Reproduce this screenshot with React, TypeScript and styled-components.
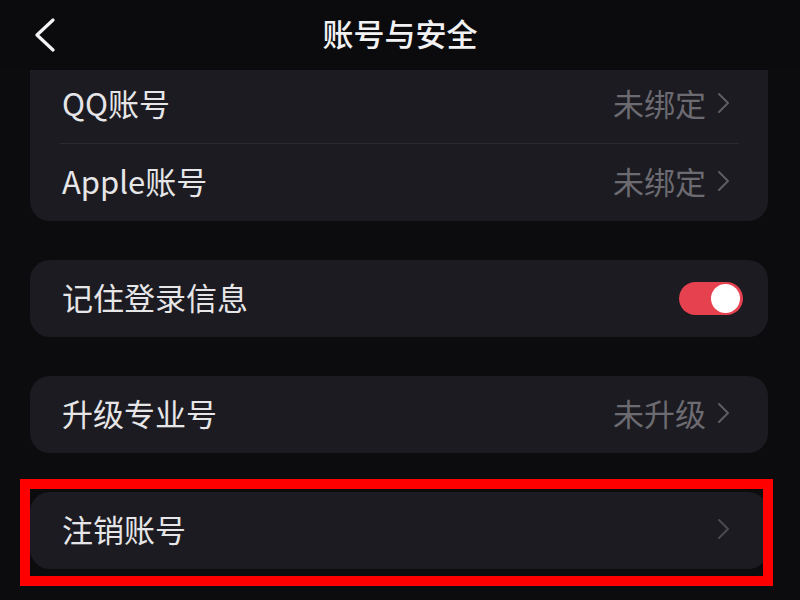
import React from "react";
import styled, { createGlobalStyle } from "styled-components";

const GlobalStyle = createGlobalStyle`
  html, body {
    margin: 0;
    padding: 0;
    background: #0c0c0f;
  }
  * {
    box-sizing: border-box;
  }
`;

const Page = styled.div`
  position: relative;
  width: 800px;
  height: 600px;
  overflow: hidden;
  display: flex;
  flex-direction: column;
  background: #0c0c0f;
  font-family: "Noto Sans CJK SC", "Noto Sans", sans-serif;
  color: #e8e8ea;
`;

const Header = styled.div`
  height: 70px;
  flex-shrink: 0;
  display: grid;
  grid-template-columns: 120px 1fr 120px;
  align-items: center;
  padding-bottom: 6px;
  background: #0b0b0e;
`;

const BackButton = styled.div`
  display: flex;
  align-items: center;
  padding-left: 34px;
  padding-top: 6px;
`;

const Title = styled.div`
  text-align: center;
  font-size: 31px;
  font-weight: 500;
  color: #f2f2f4;
`;

const ScrollArea = styled.div`
  flex: 1;
  overflow: hidden;
  padding: 0 32px 0 30px;
`;

const List = styled.div`
  display: flex;
  flex-direction: column;
  gap: 39px;
  margin-top: -4px;
`;

const Card = styled.div<{ $cut?: boolean }>`
  background: #1c1b21;
  border-radius: ${(p) => (p.$cut ? "0 0 20px 20px" : "20px")};
  overflow: hidden;
  display: flex;
  flex-direction: column;
`;

const Row = styled.div`
  height: 77px;
  display: flex;
  align-items: center;
  justify-content: space-between;
  padding: 0 38px 4px 32px;
`;

const Divider = styled.div`
  height: 1px;
  margin: 0 29px 0 30px;
  background: #2c2b31;
`;

const Label = styled.span`
  font-size: 31px;
  color: #e6e6e8;
`;

const Trailing = styled.div`
  display: flex;
  align-items: center;
  gap: 11px;
`;

const Value = styled.span`
  font-size: 31px;
  color: #6c6b71;
`;

const Toggle = styled.div<{ $on: boolean }>`
  width: 64px;
  height: 33px;
  border-radius: 17px;
  margin-right: -13px;
  margin-top: 4px;
  background: ${(p) => (p.$on ? "#e5414f" : "#3a3940")};
  display: flex;
  align-items: center;
  justify-content: ${(p) => (p.$on ? "flex-end" : "flex-start")};
  padding: 0 3px;
`;

const Knob = styled.div`
  width: 29px;
  height: 29px;
  border-radius: 50%;
  background: #ffffff;
`;

const Highlight = styled.div`
  position: absolute;
  left: 20px;
  top: 479px;
  width: 753px;
  height: 107px;
  border: 10px solid #ff0000;
  pointer-events: none;
`;

const Chevron = ({ color }: { color: string }) => (
  <svg width="13" height="22" viewBox="0 0 13 22">
    <polyline
      points="2,2 11,11 2,20"
      fill="none"
      stroke={color}
      strokeWidth="2"
      strokeLinecap="round"
      strokeLinejoin="round"
    />
  </svg>
);

const BackIcon = () => (
  <svg width="22" height="34" viewBox="0 0 22 34">
    <polyline
      points="19,2 3,17 19,32"
      fill="none"
      stroke="#f4f4f6"
      strokeWidth="3.2"
      strokeLinecap="round"
      strokeLinejoin="round"
    />
  </svg>
);

type Item = { label: string; value?: string; dim?: boolean };

const LinkRow = ({ label, value, dim }: Item) => (
  <Row>
    <Label>{label}</Label>
    <Trailing>
      {value && <Value>{value}</Value>}
      <Chevron color={dim ? "#4a4950" : "#5e5d63"} />
    </Trailing>
  </Row>
);

const accounts: Item[] = [
  { label: "QQ账号", value: "未绑定" },
  { label: "Apple账号", value: "未绑定" },
];

const App = () => {
  return (
    <>
      <GlobalStyle />
      <Page>
        <Header>
          <BackButton>
            <BackIcon />
          </BackButton>
          <Title>账号与安全</Title>
          <div />
        </Header>
        <ScrollArea>
          <List>
            <Card $cut>
              {accounts.map((a, i) => (
                <React.Fragment key={a.label}>
                  {i > 0 && <Divider />}
                  <LinkRow {...a} />
                </React.Fragment>
              ))}
            </Card>
            <Card>
              <Row>
                <Label>记住登录信息</Label>
                <Toggle $on>
                  <Knob />
                </Toggle>
              </Row>
            </Card>
            <Card>
              <LinkRow label="升级专业号" value="未升级" />
            </Card>
            <Card>
              <LinkRow label="注销账号" dim />
            </Card>
          </List>
        </ScrollArea>
        <Highlight />
      </Page>
    </>
  );
};

export default App;
